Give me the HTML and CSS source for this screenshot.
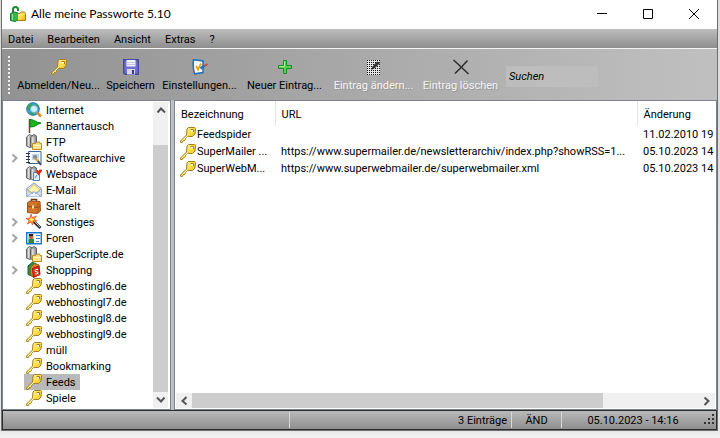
FILE: index.html
```html
<!DOCTYPE html>
<html lang="de">
<head>
<meta charset="utf-8">
<title>Alle meine Passworte 5.10</title>
<link rel="stylesheet" href="styles.css">
</head>
<body>
<svg class="sprites" aria-hidden="true">
  <defs>
    <linearGradient id="gold" x1="0" y1="0" x2="1" y2="1"><stop offset="0" stop-color="#fffbd0"/><stop offset=".5" stop-color="#fbe04a"/><stop offset="1" stop-color="#e2aa14"/></linearGradient>
    <linearGradient id="server" x1="0" x2="1"><stop offset="0" stop-color="#777"/><stop offset=".35" stop-color="#e0e0e0"/><stop offset="1" stop-color="#777"/></linearGradient>
  </defs>
  <symbol id="key" viewBox="0 0 16 16">
    <path d="M8.500.5h6q1 0 1 1L15 7l-2.500 2.500H9L7.800 9 5 11.500l.5 1-1.200 1.200-1-.2-1 2H.8L.5 14l6-6L7 2z" fill="url(#gold)" stroke="#a87b1c"/>
    <path d="M8 8l-6 6" stroke="#fff6ae"/>
    <path d="M10.500 2.500h3V5" fill="none" stroke="#a87b1c"/><path d="M11 3h2v1.500h-2z" fill="#fff"/>
  </symbol>
  <symbol id="globe" viewBox="0 0 16 16">
    <circle cx="7" cy="7" r="6.300" fill="#35a7dc" stroke="#2470b4"/>
    <path d="M1 5l4-4 2 2-2 4-2 2zM10 1l3 3-2 1-2-2zM4 10l3 0 1 3-3 0z" fill="#38a348"/>
    <circle cx="8" cy="7" r="3.600" fill="#cdf1fa" stroke="#78add0"/>
    <path d="M11 10.500l4 4" stroke="#d78b26" stroke-width="2.500"/>
  </symbol>
  <symbol id="flag" viewBox="0 0 16 16">
    <path d="M3.500 1v14" stroke="#6b4a2d" stroke-width="1.500"/>
    <path d="M4 1.500q3 0 5 1.500t6 2q-3 1-5 2.500T4 9z" fill="#1fb51f" stroke="#0b8012"/>
  </symbol>
  <symbol id="cylinders" viewBox="0 0 16 16">
    <path d="M.5 3l3-2.500L6 2v10l-2 1.500L.5 12z" fill="url(#server)" stroke="#646464"/>
    <path d="M4.500 3L8 .5 10.500 2v10L8 14.500l-3.500-2z" fill="url(#server)" stroke="#5c5c5c"/>
    <path d="M4.500 3.500L8 2l2.500 1.500" fill="none" stroke="#999"/>
  </symbol>
  <symbol id="ftp" viewBox="0 0 16 16">
    <use href="#cylinders" width="16" height="16"/>
    <path d="M6.500 15.500v-6h3l1-1.500h3l.5 1.500h1.500v6z" fill="#fbe187" stroke="#b98c1d"/><path d="M7 11.500h8" stroke="#fff6ba"/>
  </symbol>
  <symbol id="web" viewBox="0 0 16 16">
    <use href="#cylinders" width="16" height="16"/>
    <path d="M7.500 6.500h6v8h-6z" fill="#dbeeff" stroke="#5584ae"/>
    <path d="M12.500 9.500L10 6q-.5-2 1.500-2l1 1 1-1.500q3-.5 2.500 1.500z" fill="#df2918"/><path d="M9 12l2-3" stroke="#5481aa"/>
  </symbol>
  <symbol id="software" viewBox="0 0 16 16">
    <path d="M2.500 1.500h12.500v12H2.500z" fill="#f8fbff" stroke="#3e659a"/>
    <path d="M0 3.500h4M0 6.500h4M0 9.500h4M0 12.500h4" stroke="#333"/>
    <path d="M6 4h7v6H6z" fill="#c3d7ec"/><circle cx="9" cy="7" r="2" fill="#798798"/>
    <path d="M9 8l4.500 5" stroke="#d6a028" stroke-width="2"/><path d="M12 11l3 4" stroke="#3e4f83" stroke-width="2"/>
  </symbol>
  <symbol id="mail" viewBox="0 0 16 16">
    <path d="M.7 6.500L8 1l7.300 5.500v8H.7z" fill="#dce9fd" stroke="#7d9ac9"/>
    <path d="M2.500 7.500L8 2.500l5.500 5V10L8 12.500 2.500 10z" fill="#fff3a9" stroke="#e0c263"/>
    <path d="M1 14.500L7 10h2l6 4.500M1 7l6 5M15 7l-6 5" fill="#eaf3ff" stroke="#8ba8d5"/>
  </symbol>
  <symbol id="case" viewBox="0 0 16 16">
    <path d="M5.500 4V1.500h5V4" fill="none" stroke="#713413" stroke-width="1.500"/>
    <path d="M1.500 4.500L4 3l10 .5.500 9.500-3 2.500-10-1z" fill="#d27628" stroke="#995019"/>
    <path d="M2 8.500l10 1 2-1" fill="none" stroke="#8a4818"/><path d="M12 5v10" stroke="#a85820"/><path d="M6 7.500h2v3H6z" fill="#ffe197"/>
  </symbol>
  <symbol id="wand" viewBox="0 0 16 16">
    <path d="M7 7l7.500 7" stroke="#333" stroke-width="3"/><path d="M8 7l6 6" stroke="#b6b6b6"/>
    <path d="M5 0l1.200 3.500L10.500 2 8 5l3 2H7.500l-1 4L5 8l-3.500 2L3 6.500 0 4.500l4-.5z" fill="#ff9c2a" stroke="#e84928" stroke-width=".7"/>
    <path d="M5.500 3l.5 2 2.500.2-2 1.300-.5 2-1-2L3 6z" fill="#fff26a"/>
  </symbol>
  <symbol id="forum" viewBox="0 0 16 16">
    <path d="M.7 2.700h14.600v11H.7z" fill="#fff" stroke="#1976ce" stroke-width="1.400"/>
    <path d="M2 4h6v9H2z" fill="#bce0bf"/><path d="M2.500 13V9.500L4 8.500h3l1 1V13z" fill="#2f8745"/><circle cx="5" cy="6.800" r="2.100" fill="#c45b32"/><path d="M3 6V4h4v2z" fill="#272323"/>
    <path d="M10 5.500h4M10 8.500h4M10 11.500h3" stroke="#3a8ed8"/>
  </symbol>
  <symbol id="shop" viewBox="0 0 16 16">
    <path d="M2 4l4-3.500 4 1v10l-3 3-5-2z" fill="#239447" stroke="#15662d"/>
    <path d="M4.500 5l4-3.500 4.500 1.500v9l-6 3-2.500-2z" fill="#e77a27" stroke="#7c6a1a"/>
    <path d="M6.500 6.500l6.500-2.500 1 8.500-6.500 3z" fill="#df3820" stroke="#9f1a10"/>
    <path d="M12 7.500q-3-.3-3 1t1.500 1.200 1.500 1.300-2.500 1" fill="none" stroke="#fff"/>
  </symbol>
  <symbol id="app" viewBox="0 0 16 16">
    <path d="M3 7V3.500Q3 1 5.500 1T8 3.500V5" fill="none" stroke="#188b35" stroke-width="2"/>
    <path d="M.5 7.500l4-1.500L8 7v7l-3 1.500-4.500-1z" fill="#36b44f" stroke="#14792d"/><path d="M2.500 8v6" stroke="#8ee496"/>
    <path d="M7.500 14.500v-7H10L11 6h3.500l1 1.500v7z" fill="url(#gold)" stroke="#a87b1c"/>
  </symbol>
  <symbol id="disk" viewBox="0 0 16 16">
    <path d="M.7.7h14.600v14.600H2L.7 14z" fill="#6f70d2" stroke="#46479f" stroke-width="1.400"/>
    <path d="M3.500 1h9v6.500h-9z" fill="#f3f3fb"/><path d="M4 3.500h8M4 5.500h8" stroke="#c5c6d5"/>
    <path d="M4 10h8v5.500H4z" fill="#d7d7e9"/><path d="M9 11h2v4H9z" fill="#36378c"/>
  </symbol>
  <symbol id="settings" viewBox="0 0 16 16">
    <path d="M1.500.7L11 2v11.500l-8.500 1.300q-2-7-1-14z" fill="#f9fcff" stroke="#1d70b9" stroke-width="1.500"/>
    <path d="M4 7l2 3.500L9 4.500" fill="none" stroke="#e5a31f" stroke-width="1.800"/>
    <path d="M8.500 9.500l4-3" stroke="#1974bd" stroke-width="2.500"/><path d="M12.500 7l3-2" stroke="#d8402a" stroke-width="2"/>
  </symbol>
  <symbol id="plus" viewBox="0 0 16 16">
    <path d="M6.500 1.500h3v5h5v3h-5v5h-3v-5h-5v-3h5z" fill="#58cf51" stroke="#199026"/><path d="M7.500 2.500v5h-5" stroke="#a8f39a" fill="none"/>
  </symbol>
  <symbol id="edit" viewBox="0 0 16 16">
    <path d="M1 1h13v15H1z" fill="#e4e4e4"/>
    <path d="M1.500 1v15M3.500 1v15M5.500 1v15M7.500 1v15M9.500 1v15M11.500 1v15M13.500 1v15" stroke="#111" stroke-dasharray="1 1"/>
    <path d="M1 1.500h13M13.500 1v15M1 15.500h13" fill="none" stroke="#222" stroke-dasharray="1 1"/>
    <path d="M5 11l1.500-3.500L11 2.500l3.500 1L9 9z" fill="#333"/>
  </symbol>
  <symbol id="delete" viewBox="0 0 16 16">
    <path d="M.5 1l5 4.500 10 9.500M14.500 1.500L8.500 8 2 14.500" fill="none" stroke="#2c2c2c" stroke-width="1.500"/>
  </symbol>
  <symbol id="chevron" viewBox="0 0 16 16">
    <path d="M5.500 4.500L9.500 8l-4 4" fill="none" stroke="currentColor" stroke-width="2"/>
  </symbol>
</svg>

<div class="window">
  <header class="titlebar">
    <svg class="icon"><use href="#app"/></svg>
    <h1 class="title">Alle meine Passworte 5.10</h1>
    <div class="controls">
      <button class="control" aria-label="Minimieren"><svg viewBox="0 0 12 12"><path d="M1 5.500h10"/></svg></button>
      <button class="control" aria-label="Maximieren"><svg viewBox="0 0 12 12"><path d="M1.500 1.500h9v9h-9z"/></svg></button>
      <button class="control" aria-label="Schließen"><svg viewBox="0 0 12 12"><path d="M1 1l10 10M11 1L1 11"/></svg></button>
    </div>
  </header>
  <nav class="menubar">
    <button>Datei</button><button>Bearbeiten</button><button>Ansicht</button><button>Extras</button><button>?</button>
  </nav>
  <div class="toolbar">
    <span class="handle"></span>
    <button class="tool"><svg class="icon"><use href="#key"/></svg><span>Abmelden/Neu...</span></button>
    <button class="tool"><svg class="icon"><use href="#disk"/></svg><span>Speichern</span></button>
    <button class="tool"><svg class="icon"><use href="#settings"/></svg><span>Einstellungen...</span></button>
    <button class="tool"><svg class="icon"><use href="#plus"/></svg><span>Neuer Eintrag...</span></button>
    <button class="tool" disabled><svg class="icon"><use href="#edit"/></svg><span>Eintrag ändern...</span></button>
    <button class="tool" disabled><svg class="icon"><use href="#delete"/></svg><span>Eintrag löschen</span></button>
    <input class="search" type="text" aria-label="Suchen" placeholder="Suchen">
  </div>
  <main class="panes">
    <section class="pane tree-pane">
      <ul class="tree">
        <li><a href="#"><svg class="icon"><use href="#globe"/></svg>Internet</a></li>
        <li><a href="#"><svg class="icon"><use href="#flag"/></svg>Bannertausch</a></li>
        <li><a href="#"><svg class="icon"><use href="#ftp"/></svg>FTP</a></li>
        <li><svg class="icon expander"><use href="#chevron"/></svg><a href="#"><svg class="icon"><use href="#software"/></svg>Softwarearchive</a></li>
        <li><a href="#"><svg class="icon"><use href="#web"/></svg>Webspace</a></li>
        <li><a href="#"><svg class="icon"><use href="#mail"/></svg>E-Mail</a></li>
        <li><a href="#"><svg class="icon"><use href="#case"/></svg>ShareIt</a></li>
        <li><svg class="icon expander"><use href="#chevron"/></svg><a href="#"><svg class="icon"><use href="#wand"/></svg>Sonstiges</a></li>
        <li><svg class="icon expander"><use href="#chevron"/></svg><a href="#"><svg class="icon"><use href="#forum"/></svg>Foren</a></li>
        <li><a href="#"><svg class="icon"><use href="#ftp"/></svg>SuperScripte.de</a></li>
        <li><svg class="icon expander"><use href="#chevron"/></svg><a href="#"><svg class="icon"><use href="#shop"/></svg>Shopping</a></li>
        <li><a href="#"><svg class="icon"><use href="#key"/></svg>webhostingl6.de</a></li>
        <li><a href="#"><svg class="icon"><use href="#key"/></svg>webhostingl7.de</a></li>
        <li><a href="#"><svg class="icon"><use href="#key"/></svg>webhostingl8.de</a></li>
        <li><a href="#"><svg class="icon"><use href="#key"/></svg>webhostingl9.de</a></li>
        <li><a href="#"><svg class="icon"><use href="#key"/></svg>müll</a></li>
        <li><a href="#"><svg class="icon"><use href="#key"/></svg>Bookmarking</a></li>
        <li><a href="#" class="selected"><svg class="icon"><use href="#key"/></svg>Feeds</a></li>
        <li><a href="#"><svg class="icon"><use href="#key"/></svg>Spiele</a></li>
      </ul>
      <div class="scroll vertical">
        <button class="up" aria-label="Nach oben"><svg class="icon"><use href="#chevron"/></svg></button>
        <div class="track"><div class="thumb"></div></div>
        <button class="down" aria-label="Nach unten"><svg class="icon"><use href="#chevron"/></svg></button>
      </div>
    </section>
    <section class="pane list-pane">
      <table class="list">
        <colgroup><col class="col-name"><col class="col-url"><col></colgroup>
        <thead><tr><th>Bezeichnung</th><th>URL</th><th>Änderung</th></tr></thead>
        <tbody>
          <tr><td><span class="entry"><svg class="icon"><use href="#key"/></svg>Feedspider</span></td><td></td><td>11.02.2010 19</td></tr>
          <tr><td><span class="entry"><svg class="icon"><use href="#key"/></svg>SuperMailer ...</span></td><td>https://www.supermailer.de/newsletterarchiv/index.php?showRSS=1...</td><td>05.10.2023 14</td></tr>
          <tr><td><span class="entry"><svg class="icon"><use href="#key"/></svg>SuperWebM...</span></td><td>https://www.superwebmailer.de/superwebmailer.xml</td><td>05.10.2023 14</td></tr>
        </tbody>
      </table>
      <div class="scroll horizontal">
        <button class="left" aria-label="Nach links"><svg class="icon"><use href="#chevron"/></svg></button>
        <div class="track"><div class="thumb"></div></div>
        <button class="right" aria-label="Nach rechts"><svg class="icon"><use href="#chevron"/></svg></button>
      </div>
    </section>
  </main>
  <footer class="statusbar">
    <span class="message"></span>
    <span class="count">3 Einträge</span>
    <span class="mode">ÄND</span>
    <span class="clock">05.10.2023 - 14:16</span>
    <svg class="grip" viewBox="0 0 12 12"><path d="M8 0h2v2H8zM4 4h2v2H4zM8 4h2v2H8zM0 8h2v2H0zM4 8h2v2H4zM8 8h2v2H8z"/></svg>
  </footer>
</div>
</body>
</html>
```
FILE: styles.css
```css
* { box-sizing: border-box; }

body {
  margin: 0;
  height: 100vh;
  padding: 0 2px 7px 1px;
  background: linear-gradient(#ddd, #e4e4e4 98%, #f2f2f2);
  font: 11px/16px Roboto, "Open Sans", sans-serif;
  color: #000;
  overflow: hidden;
}

button {
  border: 0;
  padding: 0;
  background: none;
  font: inherit;
  color: inherit;
}

.sprites { position: absolute; width: 0; height: 0; }
.icon { width: 16px; height: 16px; flex: none; display: block; }

.window {
  height: 100%;
  display: flex;
  flex-direction: column;
  border: 1px solid #6c6e70;
  border-top: 0;
}

.titlebar {
  height: 29px;
  display: flex;
  align-items: center;
  gap: 5px;
  padding: 0 0 2px 8px;
  background: #fff;
}
.title { margin: 0; flex: 1; font: 12px/16px Lato, "Open Sans", sans-serif; }
.controls { display: flex; }
.control { width: 46px; height: 26px; display: grid; place-items: center; }
.control svg { width: 12px; height: 12px; fill: none; stroke: #000; }

.menubar {
  height: 20px;
  display: flex;
  align-items: center;
  gap: 14px;
  padding: 2px 6px 0;
  border-bottom: 1px solid #f4f4f4;
  background: linear-gradient(#bdbdbd, #8e8e8e);
}

.toolbar {
  height: 51px;
  display: grid;
  grid-template-columns: 8px 81px 47px 75px 79px 83px 75px 92px;
  column-gap: 8px;
  align-items: center;
  padding-top: 3px;
  background: linear-gradient(90deg, #929292, #c0c0c0);
}
.handle {
  justify-self: end;
  width: 2px;
  height: 40px;
  background: repeating-linear-gradient(#eee 0 2px, transparent 2px 4px);
}
.tool {
  display: flex;
  flex-direction: column;
  align-items: center;
  gap: 3px;
  white-space: nowrap;
}
.tool:disabled { color: #f4f4f4; text-shadow: 1px 1px 0 #999; }
.search {
  width: 100%;
  height: 21px;
  border: 0;
  padding: 0 3px;
  background: #bdbdbd;
  font: italic 11px/16px Roboto, "Open Sans", sans-serif;
}
.search::placeholder { color: #000; opacity: 1; }

.panes {
  flex: 1;
  min-height: 0;
  display: grid;
  grid-template-columns: 169px 1fr;
  gap: 3px;
  background: #c0bfc4;
}
.pane {
  min-width: 0;
  min-height: 0;
  display: flex;
  overflow: hidden;
  border: 1px solid #7e828c;
  background: #fff;
}
.list-pane { flex-direction: column; }

.tree { flex: 1; margin: 0; padding: 1px 0 0; list-style: none; }
.tree li { height: 16px; display: flex; justify-content: flex-start; padding-left: 21px; }
.expander { color: #a4a4a4; margin-left: -17px; margin-right: 1px; }
.tree a {
  display: flex;
  gap: 4px;
  height: 16px;
  line-height: 18px;
  padding: 0 4px 0 2px;
  color: inherit;
  text-decoration: none;
  white-space: nowrap;
}
.tree .selected { background: #b9b9b9; }

.scroll { display: flex; background: #f0f0f0; color: #555; flex: none; }
.scroll button { width: 16px; height: 16px; }
.track { flex: 1; display: flex; }
.thumb { background: #cdcdcd; }
.vertical { width: 15px; margin: 1px 2px 1px 0; flex-direction: column; }
.vertical .track { flex-direction: column; justify-content: flex-end; }
.vertical .thumb { height: 90%; }
.horizontal { height: 15px; margin: 1px; }
.horizontal .thumb { width: 81%; }
.up svg { transform: rotate(-90deg); }
.down svg { transform: rotate(90deg); }
.left svg { transform: rotate(180deg); }

.list { width: 100%; margin-bottom: auto; table-layout: fixed; border-collapse: collapse; }
.col-name { width: 100px; }
.col-url { width: 362px; }
.list th {
  height: 25px;
  padding: 2px 6px 0;
  border-right: 1px solid #e3e3e3;
  text-align: left;
  font-weight: normal;
}
.list th:last-child { border: 0; }
.list td { height: 17px; padding: 1px 6px 0; white-space: nowrap; overflow: hidden; }
.list td:first-child { padding: 1px 5px 0; }
.list td:last-child { padding-right: 0; }
.entry { display: flex; gap: 1px; }

.statusbar {
  height: 20px;
  display: flex;
  align-items: center;
  border: 1px solid #2c2e30;
  background: linear-gradient(#bababa, #8e8e8e);
}
.statusbar span { padding: 0 4px; border-right: 1px solid #d8d8d8; height: 16px; line-height: 18px; }
.statusbar .message { flex: 1; }
.statusbar .count { width: 222px; text-align: right; }
.statusbar .mode { width: 50px; text-align: center; }
.statusbar .clock { width: 142px; border: 0; text-align: center; }
.grip { width: 12px; height: 12px; fill: #333; }
```
